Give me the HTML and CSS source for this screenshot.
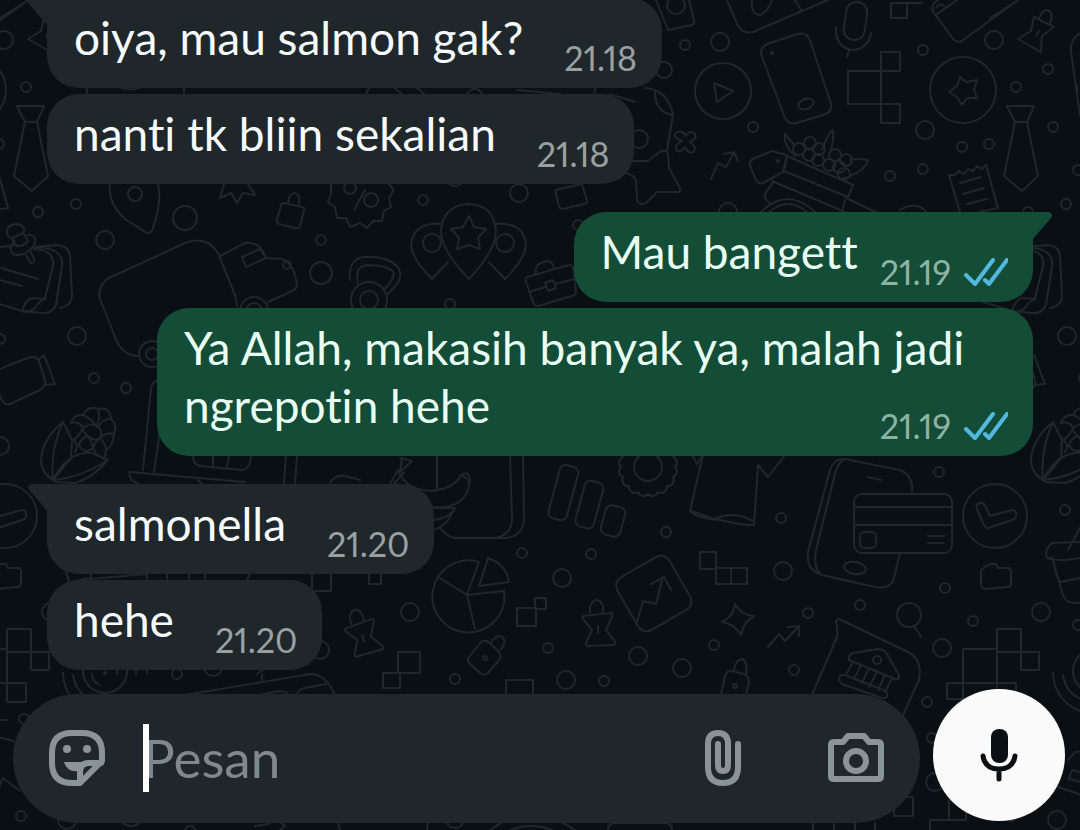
FILE: index.html
```html
<!DOCTYPE html>
<html lang="id">
<head>
    <meta charset="UTF-8">
    <meta name="viewport" content="width=device-width, initial-scale=1.0">
    <title>Chat</title>
    <link rel="stylesheet" href="styles.css">
</head>
<body>

    <!-- wallpaper, repeats every 990px -->
    <svg class="wallpaper" aria-hidden="true">
        <defs>
            <g id="lock-star">
                <path d="M-14 -9L14 -12Q17 -12 15 -8L9 5L18 17Q19 20 16 20L-9 21Q-12 21 -11 18L-5 5L-14 -6Q-15 -9 -14 -9ZM-7 -12V-18Q-5 -25 0 -25Q5 -24 6 -18V-13M1 1V8"/>
            </g>
            <g id="doodles">
                <!-- dots -->
                <circle cx="4" cy="40" r="9"/><circle cx="26" cy="87" r="5"/><circle cx="38" cy="212" r="5"/>
                <circle cx="76" cy="204" r="5"/><circle cx="185" cy="218" r="12"/><circle cx="105" cy="240" r="9"/>
                <circle cx="321" cy="240" r="5"/><circle cx="321" cy="273" r="11"/><circle cx="685" cy="45" r="5"/>
                <circle cx="720" cy="42" r="9"/><circle cx="664" cy="70" r="8"/><circle cx="639" cy="139" r="9"/>
                <circle cx="423" cy="200" r="5"/><circle cx="519" cy="193" r="9"/><circle cx="455" cy="177" r="9"/>
                <circle cx="578" cy="225" r="5"/><circle cx="923" cy="50" r="5"/>
                <circle cx="58" cy="69" r="5"/><circle cx="63" cy="127" r="5"/><circle cx="962" cy="147" r="5"/>
                <circle cx="989" cy="144" r="5"/><circle cx="925" cy="130" r="9"/><circle cx="753" cy="127" r="5"/>
                <circle cx="923" cy="169" r="5"/><circle cx="890" cy="176" r="5"/><circle cx="88" cy="170" r="5"/>
                <circle cx="728" cy="212" r="9"/><circle cx="77" cy="336" r="9"/><circle cx="0" cy="339" r="5"/>
                <circle cx="94" cy="378" r="5"/><circle cx="126" cy="388" r="5"/><circle cx="0" cy="446" r="9"/>
                <circle cx="450" cy="304" r="5"/><circle cx="666" cy="532" r="5"/><circle cx="522" cy="553" r="5"/>
                <circle cx="591" cy="554" r="5"/><circle cx="781" cy="518" r="5"/><circle cx="939" cy="472" r="5"/>
                <circle cx="75" cy="510" r="5"/><circle cx="320" cy="650" r="9"/><circle cx="177" cy="674" r="5"/>
                <circle cx="213" cy="667" r="9"/><circle cx="24" cy="719" r="5"/><circle cx="410" cy="612" r="9"/>
                <circle cx="562" cy="578" r="9"/><circle cx="548" cy="648" r="5"/><circle cx="455" cy="679" r="5"/>
                <circle cx="566" cy="680" r="9"/><circle cx="604" cy="681" r="5"/><circle cx="638" cy="656" r="9"/>
                <circle cx="682" cy="668" r="9"/><circle cx="714" cy="645" r="5"/><circle cx="783" cy="571" r="9"/>
                <circle cx="808" cy="613" r="5"/><circle cx="860" cy="605" r="5"/><circle cx="945" cy="588" r="5"/>
                <circle cx="942" cy="648" r="9"/><circle cx="794" cy="670" r="5"/><circle cx="973" cy="621" r="5"/>
                <circle cx="51" cy="612" r="9"/><circle cx="927" cy="702" r="5"/><circle cx="932" cy="738" r="5"/>
                <circle cx="935" cy="782" r="9"/><circle cx="21" cy="816" r="5"/><circle cx="67" cy="820" r="9"/>
                <circle cx="88" cy="625" r="5"/><circle cx="455" cy="819" r="9"/><circle cx="190" cy="831" r="5"/>
                <!-- envelope and pin -->
                <path d="M0 18L27 1"/>
                <path d="M44 17L64 27L52 36L51 52L28 39L41 31ZM49 19Q52 9 58 10Q64 13 60 24M49 31L46 36"/>
                <!-- tie -->
                <path d="M17 106H44L37 122H25ZM25 122L14 176L32 191L48 176L37 122"/>
                <!-- star coin -->
                <circle cx="963" cy="90" r="33"/>
                <path d="M960 77L966 82L977 80L974 90L977 98L967 98L962 105L957 97L949 92L957 86Z"/>
                <!-- map pin, burst, padlock -->
                <path d="M110 184Q108 204 125 219L147 233Q151 234 153 228Q162 202 158 184"/>
                <circle cx="135" cy="194" r="7"/>
                <path d="M224 184L220 198L231 193L237 203L243 193L255 195L248 184"/>
                <path d="M284 203L302 207Q305 208 304 211L300 226Q299 229 295 228L279 224Q276 223 277 219L281 206Q281 203 284 203ZM288 203Q289 193 295 193Q301 195 299 206"/>
                <!-- percent badge -->
                <path d="M331 184L331 194L328 202L335 207L337 218L346 218L350 227L360 223L367 228L373 221L382 221L384 211L391 207L389 198L394 190L389 184M365 190L354 210"/>
                <circle cx="350" cy="188" r="6"/><circle cx="371" cy="200" r="7"/>
                <!-- gaps between bubbles -->
                <path d="M87 86V95M114 84Q130 95 148 84M184 86V95M366 94L369 88M392 86L402 94M415 86L424 94M467 94Q474 84 483 94M517 90L560 94M594 94L596 86M610 94L635 102"/>
                <!-- photo -->
                <path d="M656 0L668 30L692 25Q695 24 694 20L689 0"/>
                <circle cx="676" cy="5" r="9"/>
                <!-- play button -->
                <circle cx="723" cy="91" r="28"/>
                <path d="M714 83L733 91L717 102Z"/>
                <!-- figure, clover, arrow -->
                <path d="M645 88Q668 90 673 115L667 150M655 92Q655 112 672 115M630 161H648L661 151Q668 150 668 155L669 168L680 188Q681 193 676 192L657 192L646 203Q639 206 637 200L636 180Q634 175 623 172"/>
                <path d="M686 136Q690 129 695 134Q697 139 690 142Q698 148 693 152Q688 154 685 147Q679 155 676 149Q675 144 682 141Q672 137 676 133Q682 129 686 136Z"/>
                <path d="M711 179L718 163L726 167L734 152M724 154L734 152L738 161"/>
                <path d="M555 190L582 184L587 201Q587 204 584 204L563 209Q560 209 559 206Z"/>
                <!-- balloons -->
                <path d="M469 279Q441 250 441 231Q443 205 469 204Q494 205 496 231Q496 250 469 279Z"/>
                <path d="M469 216L474 227L486 229L478 238L480 249L469 245L457 249L459 238L451 229L463 227Z"/>
                <path d="M442 224Q412 222 411 246Q413 260 432 279L448 262M496 224Q525 222 526 246Q524 260 505 279L489 262"/>
                <circle cx="432" cy="243" r="9"/><circle cx="505" cy="243" r="9"/>
                <!-- briefcase -->
                <path d="M527 277L569 265Q572 264 573 268L576 292Q576 295 572 296L538 306Q534 306 533 302L526 282Q525 278 527 277ZM536 274Q534 264 544 262Q552 259 554 268M529 292L545 287M555 284L575 279M545 283L553 280L556 288L548 291Z"/>
                <!-- phone -->
                <path d="M762 57Q759 48 767 44L798 34Q807 32 810 40L831 104Q832 111 826 114L797 123Q788 125 785 118Z"/>
                <circle cx="772" cy="53" r="1"/><ellipse cx="806" cy="104" rx="8" ry="5" transform="rotate(-20 806 104)"/>
                <path d="M727 0L738 26Q743 34 753 32L828 0M795 0L801 10M752 0Q750 14 760 15Q768 12 772 0"/>
                <!-- mic -->
                <rect x="845" y="2" width="21" height="38" rx="10" transform="rotate(8 855 21)"/>
                <path d="M836 27Q835 48 853 50Q868 49 871 33M849 50L847 57"/>
                <!-- blocks -->
                <path d="M891 3H907V18H891ZM907 3H922M848 71H881V104H848ZM881 52H900V71H881ZM881 104H900V123H881ZM881 71V104"/>
                <!-- wallet -->
                <path d="M938 0Q929 6 934 13L954 40Q958 43 962 41L1018 0M937 14L960 -2M936 8Q940 2 944 6"/>
                <path d="M91 33Q80 38 81 52L90 115"/>
                <!-- bouquet -->
                <path d="M750 166Q749 161 753 159L772 151L787 155L783 172L763 183Q758 184 756 180ZM787 156L853 185L848 197L784 171ZM773 182L765 194Q764 200 770 203M772 181L845 212M848 199L880 214M846 197L842 212M760 213Q788 185 816 213M768 213Q788 195 808 213"/>
                <path d="M795 156Q783 145 785 134L794 145M822 150Q828 133 833 130Q834 142 830 153M850 160Q858 158 868 160Q865 172 842 179"/>
                <g>
                    <circle cx="799" cy="149" r="6"/><circle cx="810" cy="143" r="6"/><circle cx="809" cy="155" r="6"/><circle cx="819" cy="149" r="6"/>
                    <circle cx="818" cy="160" r="6"/><circle cx="835" cy="155" r="6"/><circle cx="846" cy="160" r="6"/><circle cx="829" cy="165" r="6"/>
                    <circle cx="839" cy="167" r="6"/><circle cx="844" cy="174" r="6"/><circle cx="778" cy="161" r="1"/>
                </g>
                <!-- receipt -->
                <path d="M949 175L955 175L959 171L964 174L968 169L973 171L977 166L982 169L986 165L998 208L988 210L980 212M949 175L960 212M960 183L981 177M963 194L984 188M967 204L987 199M900 210Q915 201 926 211"/>
                <!-- notebook and pushpin -->
                <path d="M0 247L12 246M35 247L58 245Q69 246 70 256L72 295Q72 306 60 308M34 249Q55 250 53 266L45 298M36 247Q64 248 62 266L56 305Q52 314 42 313L22 311L-10 301M22 311Q26 298 34 298L46 299Q40 300 34 309Q28 313 22 311M1 268L38 279M0 280L22 286"/>
                <path d="M7 232Q7 224 18 224Q27 227 23 233L12 238Q7 237 7 232ZM12 238L15 245M24 234L28 241M15 241Q7 248 13 254Q22 257 30 250Q39 241 33 236L28 235M15 245Q22 248 28 241M26 255L31 263Q35 263 34 259L31 252"/>
                <!-- bag with wheels -->
                <path d="M107 279L185 243Q207 235 218 253L235 295L237 306M107 279Q97 288 100 299L117 342Q125 356 138 356M220 256L245 243Q260 241 266 258L282 259Q290 262 294 272L297 283Q297 290 290 292L268 302M242 257L260 249L266 258L246 267Z"/>
                <circle cx="152" cy="354" r="13"/><circle cx="152" cy="354" r="6"/><circle cx="254" cy="311" r="14"/><circle cx="254" cy="311" r="8"/><circle cx="287" cy="265" r="4"/>
                <!-- joystick -->
                <circle cx="369" cy="300" r="18"/><circle cx="369" cy="300" r="9"/>
                <path d="M350 280Q348 258 365 257Q388 256 398 267Q403 276 397 284L388 294M358 284Q354 266 368 265Q385 265 393 271Q396 277 385 289"/>
                <!-- camcorder -->
                <path d="M-10 373L30 357Q37 356 39 361L45 380Q46 387 40 390L10 404Q4 406 0 396L-10 373M38 360L44 355L55 384L45 385"/>
                <!-- corn -->
                <path d="M63 422Q41 440 41 462Q43 475 53 480Q50 450 63 422ZM63 422L72 440L71 458L53 480M53 480Q68 451 92 453L108 460Q93 478 75 483L56 482L46 474M53 480Q80 478 108 460"/>
                <path d="M71 423Q74 414 83 415Q88 405 98 409Q110 406 111 419Q118 424 114 434Q113 446 106 450L105 457M71 423Q80 421 83 428Q78 438 73 440Q80 445 75 452M83 415Q91 418 96 426Q101 420 98 409M83 428Q91 422 96 426Q104 430 100 438Q94 442 88 436Q82 431 83 428M111 419Q101 419 99 427M114 434Q106 432 100 438Q106 444 106 450M88 436Q80 438 79 446Q86 455 93 448Q91 440 88 436M100 438Q95 442 93 448L96 454"/>
                <!-- laptop -->
                <path d="M157 380Q153 382 151 388L143 470M160 430L154 472M245 482L129 472Q130 482 138 483M193 455Q193 465 200 466L242 470Q250 470 251 456M213 456V466M229 456L227 468M286 455L284 483M297 455L295 483M330 483Q335 474 345 476L360 480M198 480L202 484"/>
                <!-- bananas and pad -->
                <path d="M437 455V490M400 458L412 461L400 472L402 458M390 484L398 470Q405 490 432 491Q455 488 461 475Q468 470 470 479Q468 510 432 507M394 484L404 472M462 475L468 480M433 508L455 508L448 520Q442 528 433 530M434 520Q448 518 453 511M510 455L512 518Q512 535 495 538M523 455L524 520Q522 537 505 538H455Q445 536 440 527"/>
                <!-- bar chart -->
                <rect x="554" y="465" width="19" height="55" rx="6" transform="rotate(15 563 492)"/>
                <rect x="580" y="481" width="19" height="47" rx="6" transform="rotate(15 589 504)"/>
                <rect x="603" y="506" width="20" height="30" rx="6" transform="rotate(15 613 521)"/>
                <!-- gear -->
                <circle cx="648" cy="467" r="14"/>
                <path d="M675 467a6 6 0 0 1 -2 10a6 6 0 0 1 -6 9a6 6 0 0 1 -9 6a6 6 0 0 1 -10 2a6 6 0 0 1 -10 -2a6 6 0 0 1 -9 -6a6 6 0 0 1 -6 -9a6 6 0 0 1 -2 -10a6 6 0 0 1 2 -10M675 467a6 6 0 0 0 -2 -10"/>
                <!-- shirt -->
                <path d="M703 455L690 511Q697 518 720 520Q740 525 754 525L758 465L768 477L785 455M692 455L697 464L703 455M692 511L714 519Q735 510 753 521"/>
                <!-- phone with card -->
                <path d="M830 470Q834 458 845 459L900 470Q914 476 912 493M830 470L808 552Q806 570 822 575L875 587Q891 590 894 578L900 553M845 459Q838 462 835 474L816 550Q813 570 822 575M867 477L881 480"/>
                <ellipse cx="855" cy="568" rx="11" ry="6" transform="rotate(10 855 568)"/>
                <rect x="854" y="494" width="98" height="59" rx="8"/>
                <path d="M854 507H952M854 525H952M928 536H944M928 543H944"/>
                <rect x="860" y="532" width="16" height="16" rx="4"/>
                <!-- check -->
                <circle cx="995" cy="516" r="32"/>
                <path d="M977 509Q975 504 980 503Q984 502 985 506L990 516L1012 510Q1017 511 1016 516Q1016 519 1012 520L988 528Q985 528 984 525Z"/>
                <!-- shaker -->
                <path d="M90 542L62 543Q54 550 57 558Q70 562 90 558M78 550L90 528M62 558L73 595Q76 603 85 603H95M70 582L90 578"/>
                <!-- folder -->
                <path d="M981 570L985 567L990 564L996 564L998 568L1009 568L1011 571V583Q1011 587 1008 587L985 589Q981 588 981 584Z"/>
                <path d="M66 573L69 580M91 574V579M147 574V579M167 574V579M189 574V579M205 574V579M250 574L247 580M90 579L147 574"/>
                <!-- block cluster -->
                <path d="M997 629H1021V652H997ZM1021 652H1039V670H1021ZM963 649H997V683H963ZM947 683H963V699H947ZM997 652V683H1016V702H997ZM963 683V720H997"/>
                <path d="M312 570H331V591H312ZM517 608H536V626H517ZM535 598H546V609H535ZM398 652H420V673H398ZM383 673H400V688H383ZM506 680H533V700H506ZM369 570H381V584H369ZM700 552H716V569H700ZM716 568H747V584H716ZM731 568V584M894 797H913V816H894ZM930 830V820H966V800H949V820"/>
                <!-- contactless -->
                <path d="M63 673Q64 700 90 711M73 675Q76 694 92 699M92 674Q92 682 100 685"/>
                <circle cx="105" cy="671" r="22"/><circle cx="105" cy="673" r="1"/>
                <path d="M117 670V674M136 670V673M147 670V673M257 674L263 670M262 674V680M185 695L310 674Q326 674 335 695M297 695Q298 689 305 688L326 684M258 695L280 691Q287 691 288 695"/>
                <!-- pie -->
                <path d="M479 562A36 36 0 1 0 504 591L467 595ZM467 595L438 577M467 595L475 629M488 558L479 586L509 582Q506 564 488 558Z"/>
                <!-- padlocks -->
                <use href="#lock-star" x="597" y="625"/>
                <use href="#lock-star" transform="translate(361 634) rotate(-14)"/>
                <path d="M481 642Q486 639 490 643L499 652Q502 656 499 660L488 673Q484 676 480 673L469 663Q467 660 469 657ZM491 643Q495 635 501 636Q508 641 501 649"/>
                <circle cx="485" cy="658" r="2"/>
                <!-- trend card -->
                <rect x="624" y="563" width="60" height="61" rx="10" transform="rotate(-30 654 594)"/>
                <path d="M637 622L643 601L656 604L663 577M651 584L664 577L671 590"/>
                <!-- sparkle, arrow, usb -->
                <path d="M735 604Q741 615 754 616Q743 622 741 635Q735 624 722 622Q734 616 735 604Z"/>
                <path d="M768 647L779 634L785 641L799 626M788 627L799 626V636"/>
                <path d="M721 695L725 676Q727 670 732 671L744 674Q749 676 749 682L746 695M734 670Q736 659 742 659Q748 661 746 674"/>
                <circle cx="735" cy="686" r="2"/>
                <!-- magnifier -->
                <circle cx="909" cy="615" r="12"/><path d="M914 626L921 637"/>
                <!-- bank -->
                <path d="M812 695L837 637Q838 631 836 621Q838 618 841 620L908 652Q923 660 919 680L903 715M849 660Q848 655 853 653L878 649Q884 649 887 654L899 675Q900 680 895 679ZM853 662L847 673M861 665L854 679M869 668L862 683M877 672L869 687M885 675L878 690M892 678L885 692M839 680Q839 674 845 675L883 690Q888 692 887 696Q886 699 882 698L842 684Z"/>
                <circle cx="877" cy="660" r="4"/>
                <!-- bottom edge -->
                <path d="M-10 735L14 741M-5 795L3 778L20 791M120 820Q131 832 143 820M255 826L268 824L275 818L285 826L280 830M428 823L427 830M490 830Q530 800 575 830M510 830Q532 822 552 830M608 830Q608 823 615 823H665Q672 823 672 830M813 823V830M834 823V830M855 823V830M875 823V830M338 823L340 830"/>
                <!-- bag -->
                <path d="M78 760L85 752L95 751M68 787L95 796M82 770L93 773L91 782L79 779Z"/>
            </g>
        </defs>
        <use href="#doodles"/>
        <use href="#doodles" x="990"/>
        <use href="#doodles" x="-990"/>
    </svg>

    <div class="chat">
        <main class="messages">
            <div class="bubble in tail">
                <p>oiya, mau salmon gak?</p>
                <time>21.18</time>
            </div>
            <div class="bubble in">
                <p>nanti tk bliin sekalian</p>
                <time>21.18</time>
            </div>
            <div class="bubble out tail">
                <p>Mau bangett</p>
                <div class="meta">
                    <time>21.19</time>
                    <svg class="ticks" viewBox="0 0 44 28"><path d="M2 17L11 26L29 2M21 22L25 26L43 2"/></svg>
                </div>
            </div>
            <div class="bubble out long">
                <p>Ya Allah, makasih banyak ya, malah jadi ngrepotin hehe</p>
                <div class="meta">
                    <time>21.19</time>
                    <svg class="ticks" viewBox="0 0 44 28"><path d="M2 17L11 26L29 2M21 22L25 26L43 2"/></svg>
                </div>
            </div>
            <div class="bubble in tail">
                <p>salmonella</p>
                <time>21.20</time>
            </div>
            <div class="bubble in">
                <p>hehe</p>
                <time>21.20</time>
            </div>
        </main>

        <form class="composer">
            <div class="field">
                <button type="button" class="icon-btn" aria-label="Stiker">
                    <svg viewBox="0 0 56 56" width="56" height="56">
                        <path class="line" d="M29 53H23Q3 53 3 33V23Q3 3 23 3H33Q53 3 53 23V31L31 53ZM31 53V42Q31 33 40 33H52"/>
                        <circle cx="18" cy="19" r="4"/><circle cx="38" cy="19" r="4"/>
                        <path d="M15 32H38Q31 35 31 41Q18 43 15 32Z"/>
                    </svg>
                </button>
                <div class="text-box">
                    <input type="text" placeholder="Pesan" aria-label="Pesan">
                    <span class="caret"></span>
                </div>
                <button type="button" class="icon-btn clip" aria-label="Lampirkan">
                    <svg viewBox="0 0 36 56" width="36" height="56">
                        <path class="line" d="M33 14V37Q33 53 18 53Q3 53 3 37V14Q3 3 13 3Q23 3 23 14V35Q23 41 18 41Q13 41 13 35V14"/>
                    </svg>
                </button>
                <button type="button" class="icon-btn" aria-label="Kamera">
                    <svg viewBox="0 0 56 56" width="56" height="56">
                        <path class="line" d="M6 12H15L20 6H36L41 12H50Q53 12 53 15V46Q53 49 50 49H6Q3 49 3 46V15Q3 12 6 12Z"/>
                        <circle class="line" cx="28" cy="31" r="10"/>
                    </svg>
                </button>
            </div>
            <button type="button" class="mic-btn" aria-label="Rekam suara">
                <svg viewBox="0 0 38 54" width="38" height="54">
                    <rect x="11" y="1" width="17" height="34" rx="8"/>
                    <path d="M3 28Q5 41 19 41Q33 41 35 28M19 41V51"/>
                </svg>
            </button>
        </form>
    </div>

</body>
</html>
```
FILE: styles.css
```css
* {
    box-sizing: border-box;
}
body {
    margin: 0;
    height: 100vh;
    overflow: hidden;
    background: #0a0f13;
    font-family: Lato, "Noto Sans", sans-serif;
    font-variant-ligatures: none;
}
.wallpaper {
    position: absolute;
    top: 0;
    left: 0;
    width: 100%;
    height: 100%;
    fill: none;
    stroke: #20262a;
    stroke-width: 2;
    stroke-linejoin: round;
    stroke-linecap: round;
}
.chat {
    position: relative;
    display: flex;
    flex-direction: column;
    height: 100%;
}
.messages {
    flex: 1;
    min-height: 0;
    display: flex;
    flex-direction: column;
    justify-content: flex-end;
    align-items: flex-start;
    gap: 6px;
    padding: 0 47px 24px;
}
.bubble {
    position: relative;
    flex: none;
    display: flex;
    align-items: flex-end;
    gap: 41px;
    max-width: 89%;
    padding: 11px 25px 21px 27px;
    border-radius: 32px;
    font-size: 46px;
    line-height: 58px;
    color: #f7fbff;
}
.bubble p {
    margin: 0;
}
.in {
    background: #1f272a;
}
.out {
    align-self: flex-end;
    gap: 22px;
    background: #144d37;
    color: #e9fff4;
}
.in + .out,
.out + .in {
    margin-top: 22px;
}
.in.tail {
    border-top-left-radius: 0;
}
.out.tail {
    border-top-right-radius: 0;
}
.tail::before {
    content: "";
    position: absolute;
    top: 0;
    width: 20px;
    height: 28px;
    background: inherit;
}
.in.tail::before {
    left: -19px;
    clip-path: path("M20 0H4Q-2 1 1 6L20 28Z");
}
.out.tail::before {
    right: -19px;
    clip-path: path("M0 0H16Q22 1 19 6L0 28Z");
}
.bubble time {
    font-size: 34px;
    line-height: 48px;
    font-variant-numeric: proportional-nums;
    color: #9ba0a2;
}
.in time,
.meta {
    margin-bottom: -15px;
}
.out time {
    color: #8fb3a2;
}
.meta {
    display: flex;
    gap: 13px;
}
.ticks {
    width: 44px;
    height: 28px;
    margin-top: 10px;
    fill: none;
    stroke: #53b8dd;
    stroke-width: 4;
    stroke-linecap: round;
    stroke-linejoin: round;
}
/* the time floats next to the last line */
.long {
    display: flow-root;
    width: 876px;
}
.long p {
    display: inline;
}
.long .meta {
    float: right;
    margin-top: 25px;
}
.composer {
    display: flex;
    align-items: flex-end;
    gap: 13px;
    margin: 0 15px 7px 13px;
}
.field {
    flex: 1;
    display: flex;
    align-items: center;
    height: 129px;
    padding: 0 36px 2px;
    border-radius: 65px;
    background: #1f272a;
}
.icon-btn,
.mic-btn {
    display: flex;
    align-items: center;
    justify-content: center;
    flex: none;
    padding: 0;
    border: none;
    background: none;
    cursor: pointer;
}
.icon-btn svg {
    fill: #8a9498;
}
.icon-btn .line {
    fill: none;
    stroke: #8a9498;
    stroke-width: 6;
    stroke-linejoin: round;
    stroke-linecap: round;
}
.clip {
    margin-right: 87px;
}
.text-box {
    position: relative;
    flex: 1;
    margin-left: 38px;
}
.text-box input {
    width: 100%;
    padding: 0;
    border: none;
    outline: none;
    background: none;
    font: inherit;
    font-size: 53px;
    line-height: 68px;
    color: #f7fbff;
}
.text-box input::placeholder {
    color: #7f888b;
    opacity: 1;
}
.caret {
    position: absolute;
    top: 0;
    left: 0;
    width: 6px;
    height: 68px;
    background: #fff;
}
.mic-btn {
    width: 132px;
    height: 132px;
    margin: -8px 0 2px;
    border-radius: 50%;
    background: #fafafa;
}
.mic-btn rect {
    fill: #0a0f13;
}
.mic-btn path {
    fill: none;
    stroke: #0a0f13;
    stroke-width: 5;
    stroke-linecap: round;
}
```
